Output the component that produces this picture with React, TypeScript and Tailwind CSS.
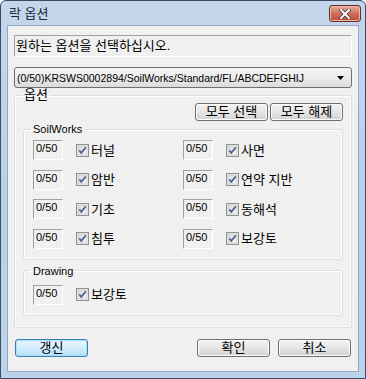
import React from "react";

const ui = { fontFamily: '"Liberation Sans", "Noto Sans CJK KR", sans-serif' };

const CheckBox = () => (
  <svg width="13" height="13" viewBox="0 0 13 13" className="shrink-0">
    <defs>
      <linearGradient id="cbg" x1="0" y1="0" x2="1" y2="1">
        <stop offset="0" stopColor="#dcdcdc" />
        <stop offset="1" stopColor="#f6f6f6" />
      </linearGradient>
    </defs>
    <rect x="0.5" y="0.5" width="12" height="12" fill="#f4f4f4" stroke="#8f8f8f" />
    <rect x="2" y="2" width="9" height="9" fill="url(#cbg)" stroke="#b5b5b5" strokeWidth="0.6" />
    <path d="M3.3 6.4 L5.3 8.8 L9.8 3.4" fill="none" stroke="#4b5f93" strokeWidth="1.7" />
  </svg>
);

const Counter = () => (
  <div className="w-[30px] h-[20px] border border-t-[#a0a0a0] border-l-[#a0a0a0] border-b-white border-r-white text-[11px] leading-[13px] pl-[2px] pt-[1px] text-black">
    0/50
  </div>
);

const Item = ({ label }: { label: string }) => (
  <div className="flex items-center h-[20px]">
    <Counter />
    <div className="ml-[13px] flex items-center">
      <CheckBox />
      <span className="ml-[2px] text-[13px] leading-[15px]">{label}</span>
    </div>
  </div>
);

const WinButton = ({ label, isDefault }: { label: string; isDefault?: boolean }) => (
  <button
    className={
      "w-[73px] h-[18px] rounded-[3px] border text-[13px] leading-[14px] text-black flex items-center justify-center " +
      (isDefault
        ? "border-[#3c7fb1] bg-gradient-to-b from-[#e9f5fc] via-[#d3edfb] to-[#b6dff8] shadow-[inset_0_0_0_1px_#a8e2fb]"
        : "border-[#707070] bg-gradient-to-b from-[#f3f3f3] via-[#e6e6e6] to-[#d2d2d2] shadow-[inset_0_0_0_1px_#fcfcfc]")
    }
  >
    {label}
  </button>
);

const Group = ({ title, className, big, children }: { title: string; className?: string; big?: boolean; children: React.ReactNode }) => (
  <fieldset className={"border border-[#d5dfe5] rounded-[3px] shadow-[inset_0_0_0_1px_#ffffff] " + (className ?? "")}>
    <legend className={"ml-[7px] px-[2px] leading-[14px] text-black " + (big ? "text-[13px]" : "text-[11px]")}>{title}</legend>
    {children}
  </fieldset>
);

export default function App() {
  return (
    <div className="w-[366px] h-[379px] bg-white" style={ui}>
      <div className="w-full h-full flex flex-col rounded-t-[6px] border border-[#3b4d63] bg-gradient-to-b from-[#c4d6ec] via-[#bbd1ea] to-[#bdd3eb]">
        <div className="h-[24px] flex items-center justify-between pl-[8px] pr-[4px] shrink-0">
          <span className="text-[13px] leading-[15px] text-[#1e2a3a]">락 옵션</span>
          <div className="w-[32px] h-[17px] mt-[1px] rounded-[3px] border border-[#6b2b22] bg-gradient-to-b from-[#e6ad9f] via-[#cf6f5b] to-[#c24a34] flex items-center justify-center shadow-[inset_0_0_0_1px_#eab7aa]">
            <svg width="12" height="10" viewBox="0 0 12 10">
              <path d="M2 1 L10 9 M10 1 L2 9" stroke="#3a3a3a" strokeWidth="3.6" strokeLinecap="square" />
              <path d="M2 1 L10 9 M10 1 L2 9" stroke="#ffffff" strokeWidth="2" strokeLinecap="square" />
            </svg>
          </div>
        </div>
        <div className="flex-1 mx-[6px] mb-[6px] border border-[#93a9c3] bg-[#f0f0f0] px-[6px] pt-[9px] flex flex-col">
          <div className="h-[22px] border border-t-[#a0a0a0] border-l-[#a0a0a0] border-b-white border-r-white text-[13px] leading-[15px] pl-[1px] pt-[2px] text-black">
            원하는 옵션을 선택하십시오.
          </div>
          <div className="mt-[10px] h-[21px] rounded-[3px] border border-[#707070] bg-gradient-to-b from-[#f5f5f5] via-[#ececec] to-[#dcdcdc] flex items-center justify-between pl-[2px] pr-[7px] text-[10.5px] leading-[14px] text-black">
            <span>(0/50)KRSWS0002894/SoilWorks/Standard/FL/ABCDEFGHIJ</span>
            <svg width="7" height="4" viewBox="0 0 7 4">
              <path d="M0 0 H7 L3.5 4 Z" fill="#000" />
            </svg>
          </div>
          <Group title="옵션" big className="pb-[11px]">
            <div className="flex justify-end gap-[2px] pr-[8px] pt-[1px]">
              <WinButton label="모두 선택" />
              <WinButton label="모두 해제" />
            </div>
            <Group title="SoilWorks" className="mt-[1px] mx-[8px] pt-[4px] pb-[10px]">
              <div className="grid grid-cols-[150px_150px] gap-y-[9.5px] pl-[9px]">
                <Item label="터널" />
                <Item label="사면" />
                <Item label="암반" />
                <Item label="연약 지반" />
                <Item label="기초" />
                <Item label="동해석" />
                <Item label="침투" />
                <Item label="보강토" />
              </div>
            </Group>
            <Group title="Drawing" className="mt-[4px] mx-[8px] pt-[7px] pb-[10px]">
              <div className="pl-[9px]">
                <Item label="보강토" />
              </div>
            </Group>
          </Group>
          <div className="mt-[11px] flex items-center pl-px pr-px">
            <WinButton label="갱신" isDefault />
            <div className="ml-auto flex gap-[8px]">
              <WinButton label="확인" />
              <WinButton label="취소" />
            </div>
          </div>
        </div>
      </div>
    </div>
  );
}
